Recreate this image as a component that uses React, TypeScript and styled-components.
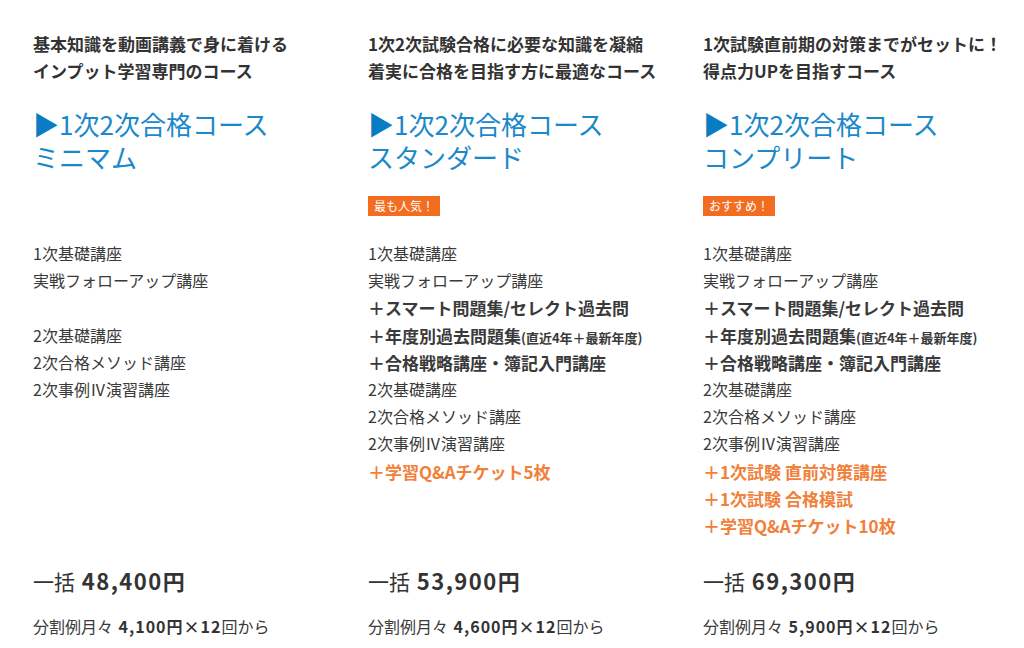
import styled, { createGlobalStyle } from "styled-components";

const GlobalStyle = createGlobalStyle`
  body {
    margin: 0;
    background: #fff;
    font-family: "Noto Sans CJK JP", "Noto Sans", sans-serif;
    color: #333;
  }
`;

const Page = styled.div`
  display: grid;
  grid-template-columns: repeat(3, 335px);
  padding: 30px 0 0 33px;
  width: 1024px;
  height: 648px;
  box-sizing: border-box;
`;

const Card = styled.div`
  display: flex;
  flex-direction: column;
`;

const Lead = styled.p`
  margin: 0;
  font-size: 17px;
  font-weight: 700;
  line-height: 27px;
  color: #333;
  white-space: nowrap;
`;

const Title = styled.h2`
  margin: 23px 0 0 0;
  font-size: 26px;
  font-weight: 400;
  line-height: 33px;
  color: #1a88c9;
  white-space: nowrap;
`;

const Arrow = styled.span`
  color: #0a7cc4;
`;

const BadgeRow = styled.div`
  height: 20px;
  margin-top: 19px;
`;

const Badge = styled.span`
  display: inline-block;
  background: #f36d21;
  color: #fff;
  font-size: 12px;
  line-height: 20px;
  padding: 0 6px;
`;

const List = styled.ul`
  list-style: none;
  margin: 28px 0 0 0;
  padding: 0;
`;

const Item = styled.li<{ $kind?: "plus" | "extra" | "blank" }>`
  font-size: ${(p) => (p.$kind === "plus" || p.$kind === "extra" ? 17 : 16)}px;
  line-height: 27.2px;
  height: 27.2px;
  white-space: nowrap;
  font-weight: ${(p) => (p.$kind === "plus" || p.$kind === "extra" ? 700 : 400)};
  color: ${(p) => (p.$kind === "extra" ? "#f0803a" : "#3a3a3a")};
`;

const Small = styled.span`
  font-size: 13px;
`;

const Price = styled.div`
  margin-top: auto;
  font-size: 21px;
  line-height: 30px;
  color: #333;
  & b {
    font-weight: 700;
    font-size: 22px;
    letter-spacing: 1.5px;
    margin-left: 2px;
  }
`;

const Monthly = styled.div`
  margin-top: 17px;
  font-size: 16px;
  line-height: 27px;
  color: #3a3a3a;
  margin-bottom: 8px;
  & b {
    font-weight: 700;
    color: #333;
    letter-spacing: 1px;
    margin-left: 2px;
  }
`;

type Line = { text: React.ReactNode; kind?: "plus" | "extra" | "blank" };

type Course = {
  lead: string[];
  name: string;
  badge?: string;
  lines: Line[];
  price: string;
  monthly: string;
};

const past = (
  <>
    ＋年度別過去問題集<Small>(直近4年＋最新年度)</Small>
  </>
);

const courses: Course[] = [
  {
    lead: ["基本知識を動画講義で身に着ける", "インプット学習専門のコース"],
    name: "ミニマム",
    lines: [
      { text: "1次基礎講座" },
      { text: "実戦フォローアップ講座" },
      { text: "", kind: "blank" },
      { text: "2次基礎講座" },
      { text: "2次合格メソッド講座" },
      { text: "2次事例Ⅳ演習講座" },
    ],
    price: "48,400円",
    monthly: "4,100円×12",
  },
  {
    lead: ["1次2次試験合格に必要な知識を凝縮", "着実に合格を目指す方に最適なコース"],
    name: "スタンダード",
    badge: "最も人気！",
    lines: [
      { text: "1次基礎講座" },
      { text: "実戦フォローアップ講座" },
      { text: "＋スマート問題集/セレクト過去問", kind: "plus" },
      { text: past, kind: "plus" },
      { text: "＋合格戦略講座・簿記入門講座", kind: "plus" },
      { text: "2次基礎講座" },
      { text: "2次合格メソッド講座" },
      { text: "2次事例Ⅳ演習講座" },
      { text: "＋学習Q&Aチケット5枚", kind: "extra" },
    ],
    price: "53,900円",
    monthly: "4,600円×12",
  },
  {
    lead: ["1次試験直前期の対策までがセットに！", "得点力UPを目指すコース"],
    name: "コンプリート",
    badge: "おすすめ！",
    lines: [
      { text: "1次基礎講座" },
      { text: "実戦フォローアップ講座" },
      { text: "＋スマート問題集/セレクト過去問", kind: "plus" },
      { text: past, kind: "plus" },
      { text: "＋合格戦略講座・簿記入門講座", kind: "plus" },
      { text: "2次基礎講座" },
      { text: "2次合格メソッド講座" },
      { text: "2次事例Ⅳ演習講座" },
      { text: "＋1次試験 直前対策講座", kind: "extra" },
      { text: "＋1次試験 合格模試", kind: "extra" },
      { text: "＋学習Q&Aチケット10枚", kind: "extra" },
    ],
    price: "69,300円",
    monthly: "5,900円×12",
  },
];

const App = () => {
  return (
    <>
      <GlobalStyle />
      <Page>
        {courses.map((c) => (
          <Card key={c.name}>
            {c.lead.map((l) => (
              <Lead key={l}>{l}</Lead>
            ))}
            <Title>
              <Arrow>▶</Arrow>1次2次合格コース
              <br />
              {c.name}
            </Title>
            <BadgeRow>{c.badge && <Badge>{c.badge}</Badge>}</BadgeRow>
            <List>
              {c.lines.map((line, i) => (
                <Item key={i} $kind={line.kind}>
                  {line.text}
                </Item>
              ))}
            </List>
            <Price>
              一括 <b>{c.price}</b>
            </Price>
            <Monthly>
              分割例月々 <b>{c.monthly}</b>回から
            </Monthly>
          </Card>
        ))}
      </Page>
    </>
  );
};

export default App;
